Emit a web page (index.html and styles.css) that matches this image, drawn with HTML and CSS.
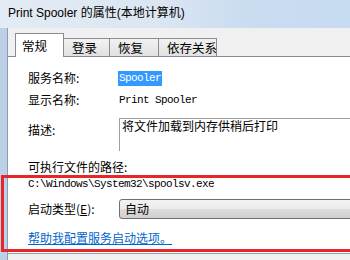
FILE: index.html
```html
<!DOCTYPE html>
<html lang="zh-CN">
<head>
  <meta charset="UTF-8">
  <title>Print Spooler 的属性(本地计算机)</title>
  <link rel="stylesheet" href="styles.css">
</head>
<body>
  <div class="window">
    <div class="titlebar">Print Spooler 的属性(本地计算机)</div>
    <div class="client">
      <!-- 选项卡 -->
      <div class="tabs">
        <div class="tab active">常规</div>
        <div class="tab">登录</div>
        <div class="tab">恢复</div>
        <div class="tab">依存关系</div>
      </div>

      <!-- 常规 -->
      <div class="panel">
        <div class="row row-name">
          <span class="label">服务名称:</span>
          <span class="mono selected">Spooler</span>
        </div>
        <div class="row row-display">
          <span class="label">显示名称:</span>
          <span class="mono">Print Spooler</span>
        </div>
        <div class="row row-desc">
          <span class="label">描述:</span>
          <div class="desc-box">将文件加载到内存供稍后打印</div>
        </div>
        <div class="row row-path-label">可执行文件的路径:</div>
        <div class="row row-path mono">C:\Windows\System32\spoolsv.exe</div>
        <div class="row row-start">
          <span class="label">启动类型(<u>E</u>):</span>
          <div class="combo">自动</div>
        </div>
        <div class="row row-link">
          <a href="#" class="help-link">帮助我配置服务启动选项。</a>
        </div>

        <div class="mark"></div>
      </div>
    </div>
  </div>
</body>
</html>
```

FILE: styles.css
```css
body {
  margin: 0;
  padding: 0;
  font-family: "Noto Sans CJK SC", "Liberation Sans", sans-serif;
  font-size: 12px;
  color: #000;
  overflow: hidden;
}
.window {
  width: 350px;
  height: 260px;
  background: #bcd0e8;
  overflow: hidden;
}
.titlebar {
  height: 28px;
  line-height: 26px;
  padding-left: 8px;
  font-family: "Liberation Sans", "Noto Sans CJK SC", sans-serif;
  font-size: 12px;
  white-space: nowrap;
  background: linear-gradient(to right, #e3ebf4 0%, #dbe6f2 45%, #cadcf0 70%, #c6daf0 100%);
}
.client {
  margin-left: 7px;
  height: 232px;
  background: #f0f0f0;
  border-left: 1px solid #8e9bab;
  position: relative;
}
.tabs {
  display: flex;
  align-items: flex-end;
  height: 28px;
  padding-left: 7px;
}
.tab {
  height: 17px;
  line-height: 17px;
  padding: 0 8px;
  margin-right: -1px;
  border: 1px solid #898c95;
  border-bottom: none;
  background: linear-gradient(#f2f2f2, #e1e1e1);
  white-space: nowrap;
  font-size: 12.5px;
}
.tab:nth-child(2) { width: 29px; }
.tab:nth-child(3) { width: 32px; }
.tab:nth-child(4) { width: 41px; }
.tab.active {
  width: 33px;
  height: 23px;
  line-height: 23px;
  padding-left: 6px;
  background: #fff;
  position: relative;
  z-index: 1;
  margin-bottom: -1px;
}
.panel {
  position: relative;
  height: 198px;
  background: #fff;
  border-top: 1px solid #898c95;
  border-bottom: 1px solid #a0a0a0;
  padding-left: 20px;
  padding-top: 13px;
  box-sizing: border-box;
}
.row {
  display: flex;
  align-items: center;
  height: 16px;
  line-height: 16px;
  white-space: nowrap;
}
.label {
  width: 91px;
  flex: none;
}
.mono {
  font-family: "Liberation Mono", monospace;
  font-size: 11px;
  letter-spacing: -0.6px;
}
.selected {
  background: #3399ff;
  color: #fff;
  padding: 0 1px;
  margin-left: -1px;
  height: 15px;
  line-height: 15px;
}
.row-display { margin-top: 6px; }
.row-desc {
  margin-top: 10px;
  height: 32px;
  align-items: flex-start;
}
.row-desc .label { margin-top: 4px; }
.desc-box {
  flex: 1;
  height: 32px;
  border-left: 1px solid #a0a0a0;
  border-top: 1px solid #a0a0a0;
  padding-left: 2px;
  line-height: 14px;
  font-size: 12px;
}
.row-path-label { margin-top: 9px; }
.row-path { margin-top: 1px; }
.row-start {
  margin-top: 7px;
  height: 20px;
}
.combo {
  flex: 1;
  height: 18px;
  line-height: 18px;
  margin-right: -10px;
  padding-left: 5px;
  border: 1px solid #707070;
  border-radius: 3px;
  background: linear-gradient(#f2f2f2 0%, #ebebeb 50%, #dddddd 51%, #cfcfcf 100%);
}
.row-link { margin-top: 11px; }
.help-link {
  color: #0066cc;
  text-decoration: underline;
}
/* 红色标注框 */
.mark {
  position: absolute;
  left: -7px;
  top: 118px;
  width: 360px;
  height: 71px;
  border: 3px solid #e8262a;
}
```
